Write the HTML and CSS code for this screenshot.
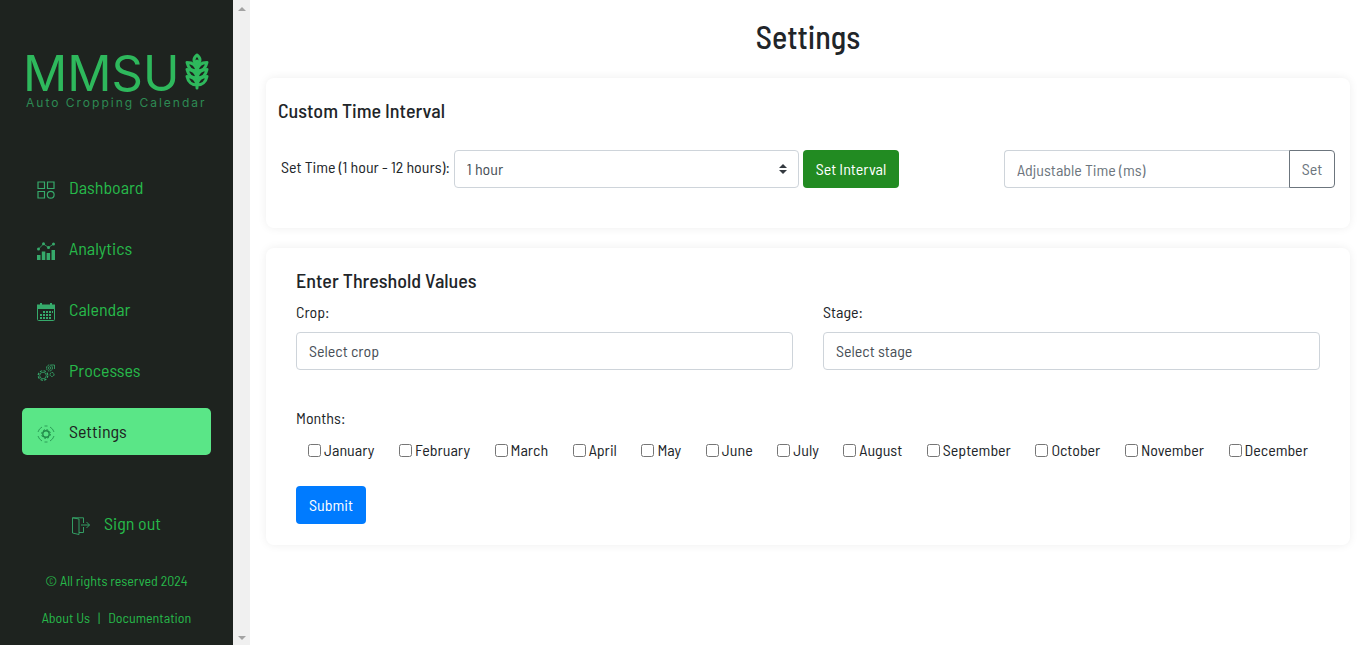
FILE: index.html
```html
<!DOCTYPE html>
<html lang="en">
<head>
<meta charset="utf-8">
<title>Settings</title>
<meta name="viewport" content="width=device-width, initial-scale=1">
<link rel="stylesheet" href="styles.css">
</head>
<body>
<aside class="sidebar">
  <a class="brand" href="#">
    <span class="brand-row">
      <span class="brand-name">MMSU</span>
      <svg class="brand-leaf" viewBox="0 0 24 37" fill="none" stroke="currentColor" stroke-width="3" stroke-linejoin="round" stroke-linecap="round">
        <path d="M12 12C8 9 8 5 12 2c4 3 4 7 0 10zM12 8v27"/>
        <path d="M12 18C7 18 3 15 2 9.500c5 0 9 2 10 8.500zM12 18c5 0 9-3 10-8.500-5 0-9 2-10 8.500z"/>
        <path d="M12 25C7 25 3 22 2 16.500c5 0 9 2 10 8.500zM12 25c5 0 9-3 10-8.500-5 0-9 2-10 8.500z"/>
        <path d="M12 32C7 32 3 29 2 23.500c5 0 9 2 10 8.500zM12 32c5 0 9-3 10-8.500-5 0-9 2-10 8.500z"/>
      </svg>
    </span>
    <span class="brand-tag">Auto Cropping Calendar</span>
  </a>
  <nav class="menu">
    <a class="item" href="#">
      <svg class="icon" viewBox="0 0 18 18" fill="none" stroke="currentColor" stroke-width="1.200"><path d="M1 1h6.500v6.500H1zM10.500 1H17v6.500h-6.500zM1 10.500h6.500V17H1z"/><circle cx="13.700" cy="13.700" r="3.400"/></svg>
      <span>Dashboard</span></a>
    <a class="item" href="#">
      <svg class="icon" viewBox="0 0 18 18" fill="currentColor"><path d="M0 13h3.500v5H0zM4.800 9.500h3.500V18H4.800zM9.600 11h3.500v7H9.600zM14.500 8H18v10h-3.500z"/><path d="M1.500 7 6.500 2l5 3.500L16.500 2" fill="none" stroke="currentColor" stroke-width=".8"/><circle cx="1.500" cy="7" r="1.500"/><circle cx="6.500" cy="1.800" r="1.500"/><circle cx="11.500" cy="5.500" r="1.500"/><circle cx="16.500" cy="2" r="1.500"/></svg>
      <span>Analytics</span></a>
    <a class="item" href="#">
      <svg class="icon" viewBox="0 0 18 18" fill="currentColor"><path d="M0 1.500h3V0h2v1.500h8V0h2v1.500h3V6H0z"/><rect x=".5" y="3" width="17" height="14.500" rx="1" fill="none" stroke="currentColor"/><path d="M9 8h2v2H9zM12 8h2v2h-2zM15 8h1v2h-1zM6 8h2v2H6zM3 11h2v2H3zM6 11h2v2H6zM9 11h2v2H9zM12 11h2v2h-2zM3 14h2v2H3zM6 14h2v2H6zM9 14h2v2H9zM12 14h2v2h-2z"/></svg>
      <span>Calendar</span></a>
    <a class="item" href="#">
      <svg class="icon" viewBox="0 0 18 18" fill="none" stroke="currentColor"><circle cx="6" cy="11.500" r="3.300" stroke-width=".8"/><circle cx="6" cy="11.500" r="4.800" stroke-width="1.200" stroke-dasharray="2.400 1.370"/><circle cx="12.500" cy="4" r="1.300" stroke-width=".8"/><circle cx="12.500" cy="4" r="3" stroke-dasharray="1.600 .756"/><circle cx="15" cy="10.500" r="2" stroke-dasharray="1.600 .5"/><path d="M14 1h3.500v4" stroke-width=".8"/></svg>
      <span>Processes</span></a>
    <a class="item active" href="#" aria-current="page">
      <svg class="icon" viewBox="0 0 18 18" fill="none" stroke="currentColor"><circle cx="9" cy="9" r="3.200" stroke-width="1.400"/><circle cx="9" cy="9" r="4.400" stroke-width="1" stroke-dasharray="1.800 1.656"/><path d="M1 7a8.300 8.300 0 0 1 4-5M1 11a8.300 8.300 0 0 0 4 5M17 7a8.300 8.300 0 0 0-4-5M17 11a8.300 8.300 0 0 1-4 5M7.500 1h3M7.500 17h3" stroke-width=".8"/></svg>
      <span>Settings</span></a>
  </nav>
  <a class="signout" href="#">
    <svg class="icon" viewBox="0 0 18 18" fill="none" stroke="currentColor" stroke-width=".9"><path d="M.5.800 7 2v15.500L.5 16zM.5.800h11V6M7 15.500h4.500V10M9 8h8.500M14.500 5l3 3-3 3"/></svg>
    <span>Sign out</span></a>
  <footer class="legal">
    <p>© All rights reserved 2024</p>
    <p class="links"><a href="#">About Us</a><span>|</span><a href="#">Documentation</a></p>
  </footer>
</aside>
<div class="scroll-track" aria-hidden="true"><i class="arrow up"></i><i class="arrow down"></i></div>
<main class="main">
  <h1>Settings</h1>
  <section class="card interval">
    <h2>Custom Time Interval</h2>
    <div class="interval-row">
      <form class="interval-form">
        <label for="time">Set Time (1 hour - 12 hours):</label>
        <span class="select-wrap">
          <select id="time" class="control"><option>1 hour</option><option>2 hours</option><option>3 hours</option><option>6 hours</option><option>12 hours</option></select>
          <svg class="caret" viewBox="0 0 8 10" fill="#343a40"><path d="M4 0 0 4h8zM4 10 0 6h8z"/></svg>
        </span>
        <button type="button" class="btn green">Set Interval</button>
      </form>
      <form class="adjust">
        <input class="control" type="text" aria-label="Adjustable Time (ms)" placeholder="Adjustable Time (ms)">
        <button type="button" class="btn outline">Set</button>
      </form>
    </div>
  </section>
  <section class="card">
    <form class="threshold">
      <h2>Enter Threshold Values</h2>
      <div class="fields">
        <div class="field"><label for="crop">Crop:</label><select id="crop" class="control"><option>Select crop</option></select></div>
        <div class="field"><label for="stage">Stage:</label><select id="stage" class="control"><option>Select stage</option></select></div>
      </div>
      <fieldset class="months">
        <legend>Months:</legend>
        <div class="month-list">
          <label><input type="checkbox">January</label>
          <label><input type="checkbox">February</label>
          <label><input type="checkbox">March</label>
          <label><input type="checkbox">April</label>
          <label><input type="checkbox">May</label>
          <label><input type="checkbox">June</label>
          <label><input type="checkbox">July</label>
          <label><input type="checkbox">August</label>
          <label><input type="checkbox">September</label>
          <label><input type="checkbox">October</label>
          <label><input type="checkbox">November</label>
          <label><input type="checkbox">December</label>
        </div>
      </fieldset>
      <button type="button" class="btn blue">Submit</button>
    </form>
  </section>
</main>
</body>
</html>
```
FILE: styles.css
```css
* { box-sizing: border-box; }
body {
  margin: 0;
  min-height: 100vh;
  display: flex;
  font: 16px/24px "Barlow Semi Condensed", "Liberation Sans Narrow", Roboto, sans-serif;
  color: #212529;
  background: #fff;
}
h1, h2, p { margin: 0; }
h1, h2 { font-weight: 500; }
a { color: inherit; text-decoration: none; }

.sidebar {
  flex: 0 0 233px;
  display: flex;
  flex-direction: column;
  padding: 49px 22px 15px;
  background: #1e231f;
  color: #27b84a;
}
.brand { display: block; padding-left: 4px; color: #2eb85c; white-space: nowrap; }
.brand-row { display: flex; align-items: flex-start; justify-content: space-between; height: 48px; }
.brand-name { margin-left: -3px; font: 400 49px/50px Inter, sans-serif; }
.brand-leaf { width: 24px; height: 37px; margin: 4px 2px 0 0; flex: none; }
.brand-tag { display: block; font: 400 12px/12px Inter, sans-serif; letter-spacing: 2px; color: #2d8a53; }

.menu { display: flex; flex-direction: column; gap: 14px; margin-top: 55px; }
.item { display: flex; align-items: center; gap: 14px; height: 47px; padding: 0 15px 2px; border-radius: 5px; font-size: 18px; }
.icon { width: 18px; height: 18px; flex: none; margin-top: 6px; color: #36aa6b; }
.active { background: #5ae687; color: #1e231f; }
.active .icon { color: #218c4b; }
.signout { display: flex; align-items: center; justify-content: center; gap: 14px; margin-top: 56px; font-size: 18px; }
.legal { margin-top: 34px; font-size: 14px; text-align: center; }
.links { display: flex; justify-content: center; gap: 8px; margin-top: 13px; }

.scroll-track { flex: 0 0 17px; display: flex; flex-direction: column; justify-content: space-between; align-items: center; padding: 7px 0 5px; background: #f0f0f0; }
.arrow { border: 4px solid transparent; }
.up { border-top: 0; border-bottom-color: #a3a3a3; }
.down { border-bottom: 0; border-top-color: #a3a3a3; }

.main { flex: 1; min-width: 0; padding: 16px; }
h1 { padding-bottom: 2px; font-size: 32px; line-height: 40px; text-align: center; }
h2 { font-size: 20px; line-height: 24px; }
.card { margin-top: 20px; padding: 20px 12px 21px; border-radius: 8px; background: #fff; box-shadow: 0 0 10px rgba(0, 0, 0, .07); }
.interval { padding: 20px 15px 40px 12px; }
.interval-row { display: flex; justify-content: space-between; margin-top: 28px; }
.interval-form { display: flex; gap: 4px; flex: 0 1 621px; padding-left: 3px; }
.interval-form label { flex: none; line-height: 34px; }
.select-wrap { position: relative; flex: 1; }
.caret { position: absolute; right: 12px; top: 14px; width: 8px; height: 10px; pointer-events: none; }
.control {
  appearance: none;
  width: 100%;
  height: 38px;
  padding: 6px 12px;
  border: 1px solid #ced4da;
  border-radius: 4px;
  background: #fff;
  color: #495057;
  font: inherit;
}
.control::placeholder { color: #6c757d; opacity: 1; }
.btn { height: 38px; padding: 0 11px; border: 1px solid transparent; border-radius: 4px; font: inherit; color: #fff; white-space: nowrap; }
.green { min-width: 96px; background: #228b22; }
.blue { min-width: 70px; background: #007bff; }
.outline { min-width: 46px; border-color: #6c757d; border-radius: 0 4px 4px 0; background: #fff; color: #6c757d; }
.adjust { display: flex; flex: 0 1 331px; }
.adjust .control { flex: 1; min-width: 0; border-right: 0; border-radius: 4px 0 0 4px; }

.threshold { padding: 0 18px; }
.fields { display: grid; grid-template-columns: 1fr 1fr; gap: 30px; margin-top: 8px; }
.field label { display: block; margin-bottom: 8px; }
.months { margin: 36px 0 0; padding: 0; border: 0; }
.months legend { padding: 0; }
.month-list { display: flex; flex-wrap: wrap; justify-content: space-between; padding: 8px 12px 0; }
.month-list label { display: flex; align-items: center; gap: 3px; }
.month-list input { width: 13px; height: 13px; margin: 0; }
.blue { margin-top: 24px; }
```
